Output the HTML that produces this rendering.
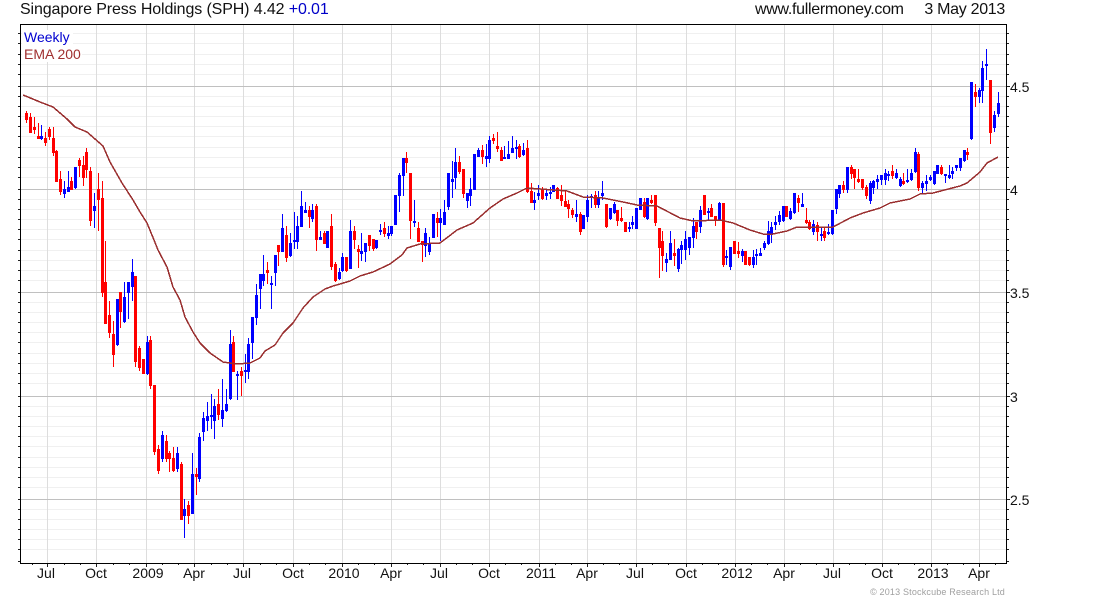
<!DOCTYPE html>
<html><head><meta charset="utf-8"><style>
html,body{margin:0;padding:0;background:#fff}
svg{display:block}
text{font-family:"Liberation Sans",sans-serif;fill:#111}
</style></head><body>
<svg width="1100" height="600" viewBox="0 0 1100 600" xmlns="http://www.w3.org/2000/svg">
<rect width="1100" height="600" fill="#fff"/>
<g shape-rendering="crispEdges" fill="none">
<path stroke="#f0f0f0" stroke-width="1" d="M20 33.5H1006M20 43.5H1006M20 54.5H1006M20 64.5H1006M20 74.5H1006M20 96.5H1006M20 106.5H1006M20 116.5H1006M20 126.5H1006M20 136.5H1006M20 147.5H1006M20 157.5H1006M20 167.5H1006M20 177.5H1006M20 199.5H1006M20 209.5H1006M20 219.5H1006M20 229.5H1006M20 239.5H1006M20 250.5H1006M20 260.5H1006M20 270.5H1006M20 280.5H1006M20 302.5H1006M20 312.5H1006M20 322.5H1006M20 332.5H1006M20 342.5H1006M20 353.5H1006M20 363.5H1006M20 373.5H1006M20 383.5H1006M20 406.5H1006M20 416.5H1006M20 426.5H1006M20 436.5H1006M20 446.5H1006M20 457.5H1006M20 467.5H1006M20 477.5H1006M20 487.5H1006M20 509.5H1006M20 519.5H1006M20 529.5H1006M20 539.5H1006M20 549.5H1006"/>
<path stroke="#dddddd" stroke-width="1" d="M47.5 24V563M96.5 24V563M146.5 24V563M194.5 24V563M243.5 24V563M293.5 24V563M342.5 24V563M391.5 24V563M440.5 24V563M489.5 24V563M539.5 24V563M587.5 24V563M636.5 24V563M686.5 24V563M735.5 24V563M784.5 24V563M833.5 24V563M882.5 24V563M931.5 24V563M979.5 24V563"/>
<path stroke="#c0c0c0" stroke-width="1" d="M20 86.5H1006M20 189.5H1006M20 292.5H1006M20 396.5H1006M20 499.5H1006"/>
<rect x="22" y="30" width="51" height="16" fill="#fff"/>
<rect x="22" y="46" width="60" height="16" fill="#fff"/>
<path stroke="#ff0000" stroke-width="1" d="M26.5 111V123M30.5 113V133M34.5 117V134M38.5 123V139M45.5 132V146M49.5 127V140M53.5 127V156M56.5 150V182M60.5 171V195M71.5 177V190M79.5 158V177M83.5 156V186M86.5 148V178M90.5 167V226M98.5 173V231M102.5 181V297M105.5 241V324M109.5 301V338M113.5 321V367M120.5 292V328M135.5 276V367M139.5 346V371M143.5 359V374M150.5 336V389M154.5 385V455M158.5 445V474M166.5 435V462M169.5 451V472M173.5 447V472M181.5 462V520M188.5 501V524M196.5 468V495M218.5 389V420M233.5 336V372M241.5 367V396M267.5 262V284M278.5 245V266M286.5 226V262M309.5 206V228M316.5 204V251M324.5 231V244M331.5 214V270M335.5 262V282M346.5 257V272M354.5 226V249M358.5 245V268M369.5 235V251M373.5 239V251M384.5 222V237M406.5 152V173M410.5 173V239M418.5 222V242M422.5 241V262M437.5 212V237M459.5 156V174M463.5 169V198M482.5 145V164M493.5 134V144M497.5 132V152M501.5 147V161M519.5 144V158M527.5 140V193M531.5 183V203M542.5 187V200M557.5 187V199M561.5 185V206M565.5 191V207M568.5 200V218M572.5 208V218M580.5 212V235M595.5 191V208M606.5 204V228M617.5 210V226M621.5 207V222M625.5 222V232M644.5 198V218M651.5 195V204M655.5 195V226M659.5 228V278M662.5 231V271M674.5 239V266M696.5 222V239M704.5 195V215M711.5 204V217M715.5 216V226M723.5 203V267M734.5 241V254M738.5 242V258M745.5 251V265M749.5 257V266M786.5 206V217M798.5 195V212M806.5 208V224M809.5 220V230M817.5 222V241M824.5 227V241M843.5 181V193M851.5 165V179M854.5 169V189M858.5 169V183M862.5 179V190M866.5 185V199M892.5 165V179M903.5 173V185M918.5 152V191M941.5 165V175M967.5 148V160M975.5 84V107M990.5 80V144"/>
<path stroke="#ff0000" stroke-width="3" d="M26.5 113V120M30.5 117V133M34.5 127V130M38.5 136V139M45.5 138V143M49.5 129V137M53.5 138V153M56.5 151V182M60.5 179V192M71.5 181V190M79.5 160V166M83.5 165V178M86.5 152V170M90.5 171V221M98.5 189V200M102.5 198V293M105.5 282V324M109.5 315V333M113.5 334V355M120.5 292V312M135.5 276V362M139.5 348V368M143.5 359V374M150.5 340V386M154.5 385V452M158.5 449V471M166.5 441V459M169.5 453V459M173.5 458V471M181.5 464V520M188.5 505V516M196.5 474V477M218.5 404V415M233.5 342V372M241.5 371V376M267.5 270V273M278.5 245V252M286.5 235V258M309.5 210V217M316.5 206V240M324.5 233V244M331.5 226V267M335.5 264V281M346.5 257V271M354.5 231V240M358.5 249V252M369.5 235V246M373.5 239V249M384.5 228V234M406.5 158V163M410.5 173V221M418.5 228V242M422.5 241V245M437.5 218V223M459.5 162V172M463.5 169V194M482.5 150V157M493.5 138V141M497.5 146V149M501.5 150V161M519.5 146V157M527.5 148V192M531.5 191V203M542.5 189V199M557.5 188V199M561.5 195V201M565.5 201V207M568.5 204V209M572.5 210V215M580.5 214V232M595.5 195V205M606.5 204V227M617.5 210V221M621.5 218V221M625.5 222V232M644.5 202V217M651.5 200V203M655.5 195V223M659.5 228V248M662.5 241V256M674.5 253V256M696.5 222V232M704.5 195V215M711.5 208V217M715.5 216V220M723.5 203V265M734.5 241V254M738.5 251V254M745.5 251V265M749.5 257V265M786.5 206V217M798.5 198V203M806.5 220V223M809.5 222V229M817.5 225V232M824.5 231V238M843.5 185V190M851.5 167V174M854.5 169V178M858.5 179V182M862.5 179V188M866.5 187V196M892.5 171V176M903.5 181V184M918.5 154V188M941.5 167V174M967.5 152V155M975.5 92V97M990.5 80V133"/>
<path stroke="#0000ff" stroke-width="1" d="M41.5 125V140M64.5 181V198M68.5 171V192M75.5 167V189M94.5 193V228M117.5 299V346M124.5 282V323M128.5 282V319M132.5 259V301M147.5 336V375M162.5 431V462M177.5 447V472M184.5 499V538M192.5 453V514M199.5 433V482M203.5 412V441M207.5 402V431M211.5 394V429M214.5 399V439M222.5 379V427M226.5 389V412M230.5 330V400M237.5 371V400M245.5 354V383M248.5 338V379M252.5 317V359M256.5 284V325M260.5 274V309M263.5 255V286M271.5 276V309M275.5 255V286M282.5 214V252M290.5 233V257M294.5 212V249M297.5 216V249M301.5 191V227M305.5 202V213M312.5 204V222M320.5 231V240M327.5 231V248M339.5 268V280M342.5 253V272M350.5 220V269M361.5 233V261M365.5 243V262M376.5 240V249M380.5 224V235M388.5 226V239M391.5 226V236M395.5 195V225M399.5 173V212M403.5 158V196M414.5 200V227M425.5 228V257M429.5 237V255M433.5 214V238M440.5 209V241M444.5 200V225M448.5 173V210M452.5 161V198M455.5 148V189M467.5 193V208M470.5 178V206M474.5 154V190M478.5 148V157M486.5 144V167M489.5 136V163M504.5 146V159M508.5 141V159M512.5 136V153M516.5 140V159M523.5 143V156M534.5 192V210M538.5 185V200M546.5 190V200M550.5 187V199M553.5 185V192M576.5 200V222M583.5 215V229M587.5 195V222M591.5 194V208M598.5 191V208M602.5 181V200M610.5 208V220M614.5 202V214M629.5 222V232M632.5 216V229M636.5 208V229M640.5 198V210M647.5 198V220M666.5 253V272M670.5 231V260M678.5 248V272M681.5 241V264M685.5 231V260M689.5 237V255M693.5 218V248M700.5 206V233M708.5 208V220M719.5 202V220M726.5 250V265M730.5 247V270M742.5 249V262M753.5 250V268M756.5 249V265M760.5 248V256M764.5 241V250M768.5 221V245M771.5 222V243M775.5 216V230M779.5 211V225M783.5 206V222M790.5 208V220M794.5 193V214M802.5 193V207M813.5 220V235M821.5 227V241M828.5 224V235M832.5 210V235M836.5 189V214M839.5 185V198M847.5 167V193M870.5 181V204M873.5 180V194M877.5 175V189M881.5 175V185M885.5 169V185M888.5 171V181M896.5 169V179M900.5 177V187M907.5 169V183M911.5 169V181M915.5 148V173M922.5 181V193M926.5 175V191M930.5 175V181M934.5 171V185M937.5 165V174M945.5 174V183M949.5 165V179M952.5 167V179M956.5 165V171M960.5 158V171M964.5 150V162M971.5 82V140M979.5 88V103M982.5 61V103M986.5 49V80M994.5 111V132M998.5 92V117"/>
<path stroke="#0000ff" stroke-width="3" d="M41.5 136V139M64.5 189V194M68.5 187V192M75.5 167V188M94.5 206V211M117.5 299V345M124.5 297V322M128.5 282V293M132.5 272V287M147.5 342V374M162.5 435V459M177.5 453V469M184.5 509V516M192.5 474V514M199.5 437V479M203.5 418V432M207.5 416V421M211.5 415V417M214.5 406V421M222.5 410V419M226.5 404V411M230.5 344V399M237.5 374V376M245.5 370V372M248.5 344V372M252.5 317V343M256.5 295V318M260.5 274V289M263.5 274V281M271.5 283V285M275.5 255V273M282.5 228V252M290.5 243V256M294.5 240V242M297.5 226V242M301.5 206V227M305.5 210V213M312.5 210V219M320.5 237V240M327.5 231V248M339.5 272V279M342.5 257V271M350.5 231V269M361.5 251V254M365.5 243V252M376.5 240V248M380.5 230V232M388.5 233V236M391.5 226V234M395.5 195V225M399.5 175V196M403.5 158V176M414.5 221V223M425.5 233V246M429.5 243V252M433.5 214V238M440.5 218V223M444.5 212V225M448.5 173V207M452.5 179V182M455.5 162V178M467.5 193V201M470.5 189V196M474.5 154V190M478.5 150V157M486.5 156V159M489.5 140V159M504.5 157V159M508.5 154V159M512.5 148V153M516.5 147V149M523.5 150V155M534.5 200V203M538.5 193V196M546.5 193V196M550.5 192V194M553.5 185V192M576.5 214V217M583.5 215V229M587.5 200V217M591.5 196V198M598.5 197V205M602.5 193V196M610.5 208V219M614.5 204V213M629.5 227V229M632.5 222V225M636.5 208V229M640.5 198V210M647.5 198V219M666.5 259V263M670.5 243V260M678.5 249V269M681.5 245V250M685.5 239V250M689.5 237V248M693.5 226V238M700.5 210V227M708.5 211V213M719.5 203V220M726.5 256V258M730.5 247V267M742.5 251V256M753.5 257V265M756.5 254V256M760.5 253V256M764.5 243V248M768.5 231V244M771.5 227V234M775.5 222V225M779.5 215V222M783.5 206V221M790.5 211V219M794.5 193V213M802.5 204V207M813.5 224V232M821.5 234V236M828.5 232V234M832.5 210V234M836.5 189V209M839.5 185V194M847.5 167V190M870.5 183V201M873.5 181V188M877.5 179V182M881.5 175V180M885.5 173V180M888.5 174V176M896.5 173V178M900.5 179V186M907.5 180V182M911.5 173V180M915.5 152V172M922.5 183V188M926.5 181V184M930.5 177V180M934.5 171V184M937.5 165V174M945.5 174V176M949.5 175V178M952.5 171V174M956.5 165V168M960.5 158V168M964.5 150V161M971.5 82V139M979.5 90V97M982.5 68V91M986.5 64V66M994.5 115V128M998.5 103V114"/>
<path stroke="#000" stroke-width="1" d="M20.5 24V563.5M20 24.5H1007M1006.5 24V563.5M20 563.5H1007"/>
<path stroke="#222" stroke-width="1" d="M18 33.5h2M18 43.5h2M18 54.5h2M18 64.5h2M18 74.5h2M18 86.5h2M18 96.5h2M18 106.5h2M18 116.5h2M18 126.5h2M18 136.5h2M18 147.5h2M18 157.5h2M18 167.5h2M18 177.5h2M18 189.5h2M18 199.5h2M18 209.5h2M18 219.5h2M18 229.5h2M18 239.5h2M18 250.5h2M18 260.5h2M18 270.5h2M18 280.5h2M18 292.5h2M18 302.5h2M18 312.5h2M18 322.5h2M18 332.5h2M18 342.5h2M18 353.5h2M18 363.5h2M18 373.5h2M18 383.5h2M18 396.5h2M18 406.5h2M18 416.5h2M18 426.5h2M18 436.5h2M18 446.5h2M18 457.5h2M18 467.5h2M18 477.5h2M18 487.5h2M18 499.5h2M18 509.5h2M18 519.5h2M18 529.5h2M18 539.5h2M18 549.5h2M18 561.5h2"/>
<path stroke="#222" stroke-width="1" d="M1007 33.5h2M1007 43.5h2M1007 54.5h2M1007 64.5h2M1007 74.5h2M1007 86.5h3M1007 96.5h2M1007 106.5h2M1007 116.5h2M1007 126.5h2M1007 136.5h2M1007 147.5h2M1007 157.5h2M1007 167.5h2M1007 177.5h2M1007 189.5h3M1007 199.5h2M1007 209.5h2M1007 219.5h2M1007 229.5h2M1007 239.5h2M1007 250.5h2M1007 260.5h2M1007 270.5h2M1007 280.5h2M1007 292.5h3M1007 302.5h2M1007 312.5h2M1007 322.5h2M1007 332.5h2M1007 342.5h2M1007 353.5h2M1007 363.5h2M1007 373.5h2M1007 383.5h2M1007 396.5h3M1007 406.5h2M1007 416.5h2M1007 426.5h2M1007 436.5h2M1007 446.5h2M1007 457.5h2M1007 467.5h2M1007 477.5h2M1007 487.5h2M1007 499.5h3M1007 509.5h2M1007 519.5h2M1007 529.5h2M1007 539.5h2M1007 549.5h2M1007 561.5h2"/>
<path stroke="#222" stroke-width="1" d="M47.5 564v3M96.5 564v3M146.5 564v3M194.5 564v3M243.5 564v3M293.5 564v3M342.5 564v3M391.5 564v3M440.5 564v3M489.5 564v3M539.5 564v3M587.5 564v3M636.5 564v3M686.5 564v3M735.5 564v3M784.5 564v3M833.5 564v3M882.5 564v3M931.5 564v3M979.5 564v3M32.5 564v1M64.5 564v1M80.5 564v1M113.5 564v1M129.5 564v1M162.5 564v1M178.5 564v1M211.5 564v1M227.5 564v1M260.5 564v1M276.5 564v1M309.5 564v1M325.5 564v1M358.5 564v1M374.5 564v1M407.5 564v1M423.5 564v1M456.5 564v1M472.5 564v1M505.5 564v1M521.5 564v1M555.5 564v1M571.5 564v1M603.5 564v1M619.5 564v1M652.5 564v1M668.5 564v1M702.5 564v1M718.5 564v1M751.5 564v1M767.5 564v1M800.5 564v1M816.5 564v1M849.5 564v1M865.5 564v1M898.5 564v1M914.5 564v1M947.5 564v1M963.5 564v1M995.5 564v1"/>
</g>
<polyline fill="none" stroke="#992e2e" stroke-width="1.5" shape-rendering="crispEdges" points="23,95 28,97 40,102 53,107 67,119 75,127 87,132 95,139 103,146 110,162 122,183 133,200 140,212 147,223 154,240 158,250 167,267 173,287 180,300 185,317 193,332 200,343 210,353 223,362 230,363 237,364 250,363 260,358 265,351 275,345 283,333 293,323 303,308 313,297 325,289 333,286 340,284 350,281 360,276 373,272 390,264 402,255 407,248 420,244 440,243 448,237 457,230 473,223 490,208 503,199 517,193 527,188 567,191 583,197 603,198 623,202 637,205 657,206 680,218 693,221 720,220 733,223 750,230 763,234 773,234 787,231 797,227 820,227 833,227 850,218 863,213 880,208 890,203 910,199 920,194 933,193 960,186 967,183 980,172 987,163 998,157"/>
<text x="20" y="14" font-size="16" letter-spacing="-.12">Singapore Press Holdings (SPH) 4.42 <tspan style="fill:#0000c8">+0.01</tspan></text>
<text x="755" y="14" font-size="16" letter-spacing="-.3">www.fullermoney.com</text>
<text x="1005" y="14" font-size="16" text-anchor="end" letter-spacing="-.3">3 May 2013</text>
<text x="24" y="42" font-size="14" style="fill:#0000d0">Weekly</text>
<text x="24" y="59" font-size="14" style="fill:#a03030">EMA 200</text>
<g font-size="14"><text x="1010" y="92">4.5</text><text x="1010" y="195">4</text><text x="1010" y="298">3.5</text><text x="1010" y="402">3</text><text x="1010" y="505">2.5</text></g>
<g font-size="14" text-anchor="middle">
<text x="46" y="578">Jul</text><text x="96" y="578">Oct</text><text x="148" y="578">2009</text><text x="194" y="578">Apr</text><text x="242" y="578">Jul</text><text x="293" y="578">Oct</text><text x="344" y="578">2010</text><text x="391" y="578">Apr</text><text x="439" y="578">Jul</text><text x="489" y="578">Oct</text><text x="541" y="578">2011</text><text x="587" y="578">Apr</text><text x="635" y="578">Jul</text><text x="686" y="578">Oct</text><text x="737" y="578">2012</text><text x="784" y="578">Apr</text><text x="832" y="578">Jul</text><text x="882" y="578">Oct</text><text x="933" y="578">2013</text><text x="979" y="578">Apr</text>
</g>
<text x="1005" y="595" font-size="9" text-anchor="end" letter-spacing=".18" style="fill:#a0a0a0">© 2013 Stockcube Research Ltd</text>
</svg>
</body></html>
